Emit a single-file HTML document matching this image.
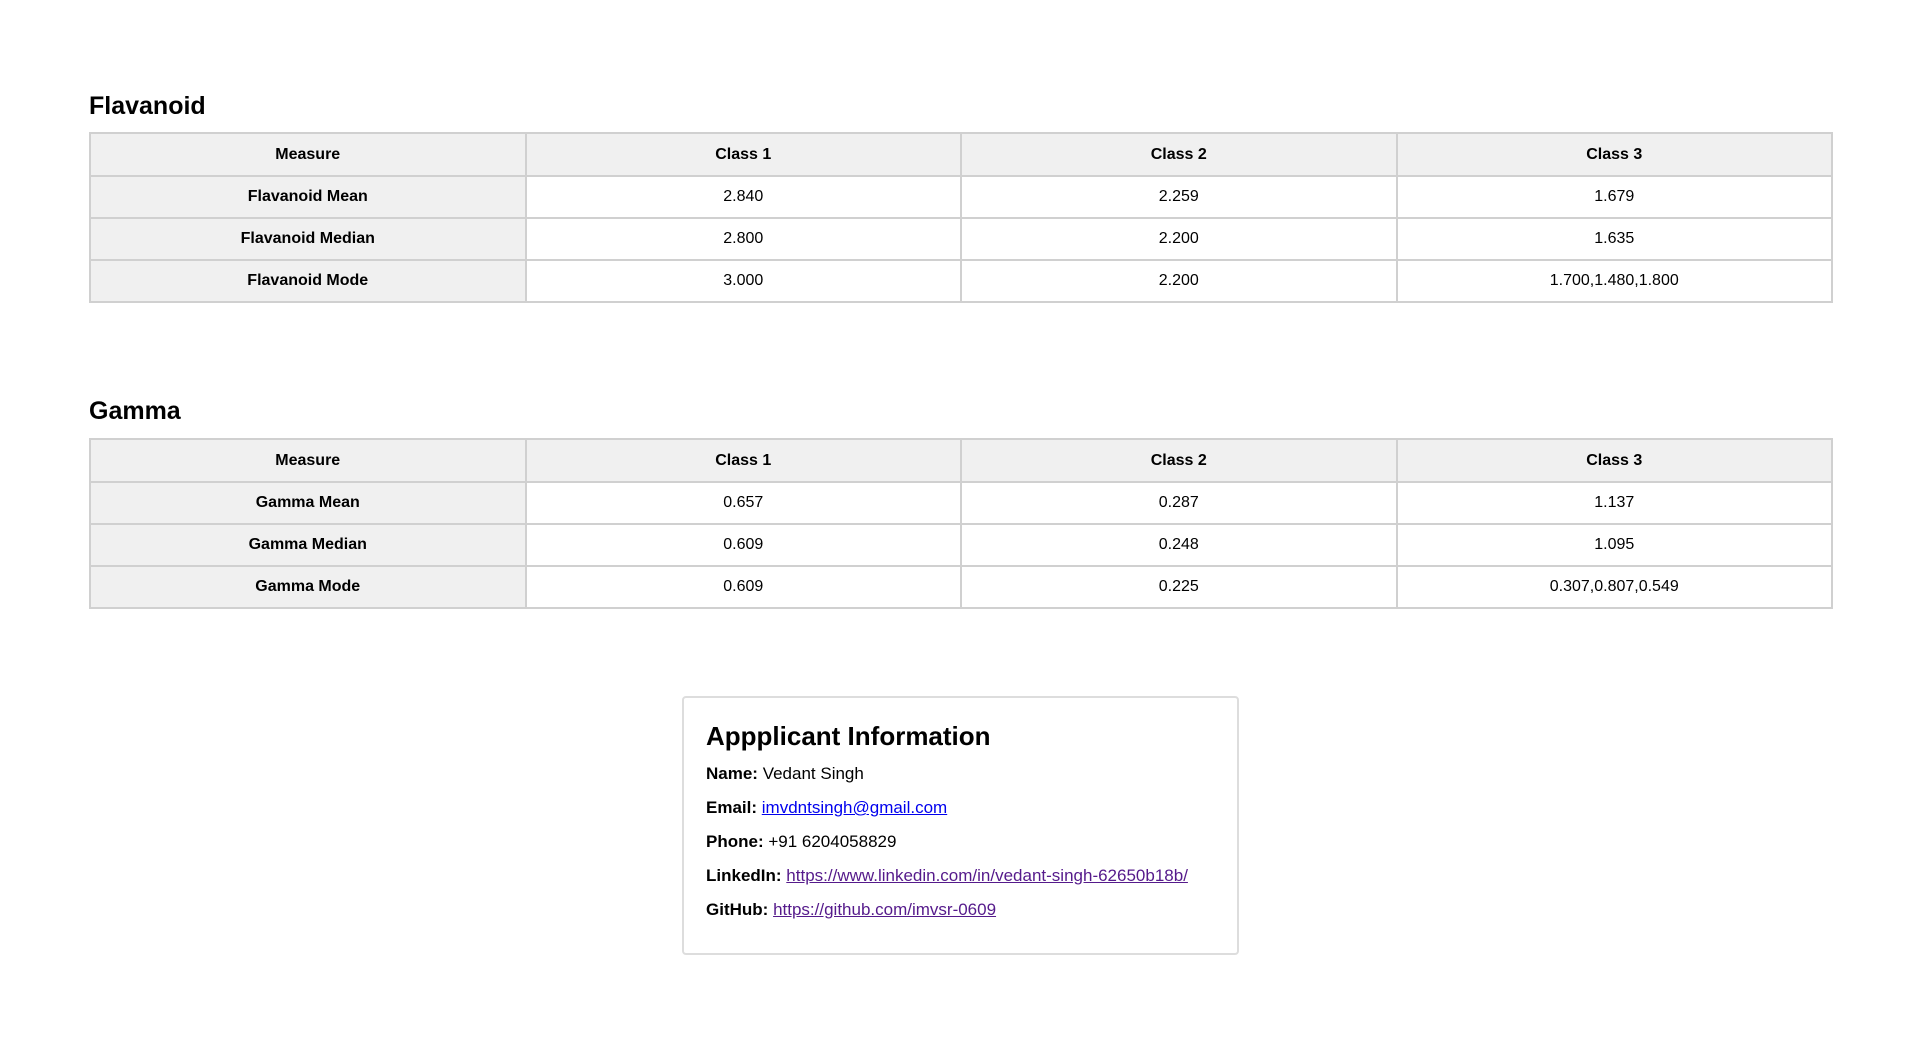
<!DOCTYPE html>
<html><head><meta charset="utf-8"><style>
body{margin:0;background:#fff;font-family:"Liberation Sans",sans-serif;color:#000;width:1921px;height:1044px;position:relative}
h2{position:absolute;left:89px;margin:0;font-size:25px;font-weight:bold}
table{position:absolute;left:89px;width:1753px;border-collapse:collapse;border:2px solid #d0d0d0;font-size:16px;table-layout:fixed}
td,th{border:2px solid #d0d0d0;height:40px;text-align:center;padding:0}
th{background:#f0f0f0;font-weight:bold;height:41px}
td.m{background:#f0f0f0;font-weight:bold}
.card{position:absolute;left:682px;top:696px;width:557px;height:259px;border:2px solid #ddd;border-radius:4px;box-sizing:border-box;padding:0 0 0 22px}
.card h3{margin:23px 0 10px;font-size:26px;font-weight:bold}
.card p{margin:0;height:34px;line-height:24px;font-size:17px}
a{color:#0000ee}a.v{color:#551a8b}
</style></head><body>
<h2 style="top:92px">Flavanoid</h2>
<table style="top:132px;width:1744px"><tr><th>Measure</th><th>Class 1</th><th>Class 2</th><th>Class 3</th></tr>
<tr><td class="m">Flavanoid Mean</td><td>2.840</td><td>2.259</td><td>1.679</td></tr>
<tr><td class="m">Flavanoid Median</td><td>2.800</td><td>2.200</td><td>1.635</td></tr>
<tr><td class="m">Flavanoid Mode</td><td>3.000</td><td>2.200</td><td>1.700,1.480,1.800</td></tr></table>
<h2 style="top:397px">Gamma</h2>
<table style="top:438px;width:1744px"><tr><th>Measure</th><th>Class 1</th><th>Class 2</th><th>Class 3</th></tr>
<tr><td class="m">Gamma Mean</td><td>0.657</td><td>0.287</td><td>1.137</td></tr>
<tr><td class="m">Gamma Median</td><td>0.609</td><td>0.248</td><td>1.095</td></tr>
<tr><td class="m">Gamma Mode</td><td>0.609</td><td>0.225</td><td>0.307,0.807,0.549</td></tr></table>
<div class="card"><h3>Appplicant Information</h3>
<p><b>Name:</b> Vedant Singh</p>
<p><b>Email:</b> <a href="#">imvdntsingh@gmail.com</a></p>
<p><b>Phone:</b> +91 6204058829</p>
<p><b>LinkedIn:</b> <a class="v" href="#">https://www.linkedin.com/in/vedant-singh-62650b18b/</a></p>
<p><b>GitHub:</b> <a class="v" href="#">https://github.com/imvsr-0609</a></p>
</div>
</body></html>
